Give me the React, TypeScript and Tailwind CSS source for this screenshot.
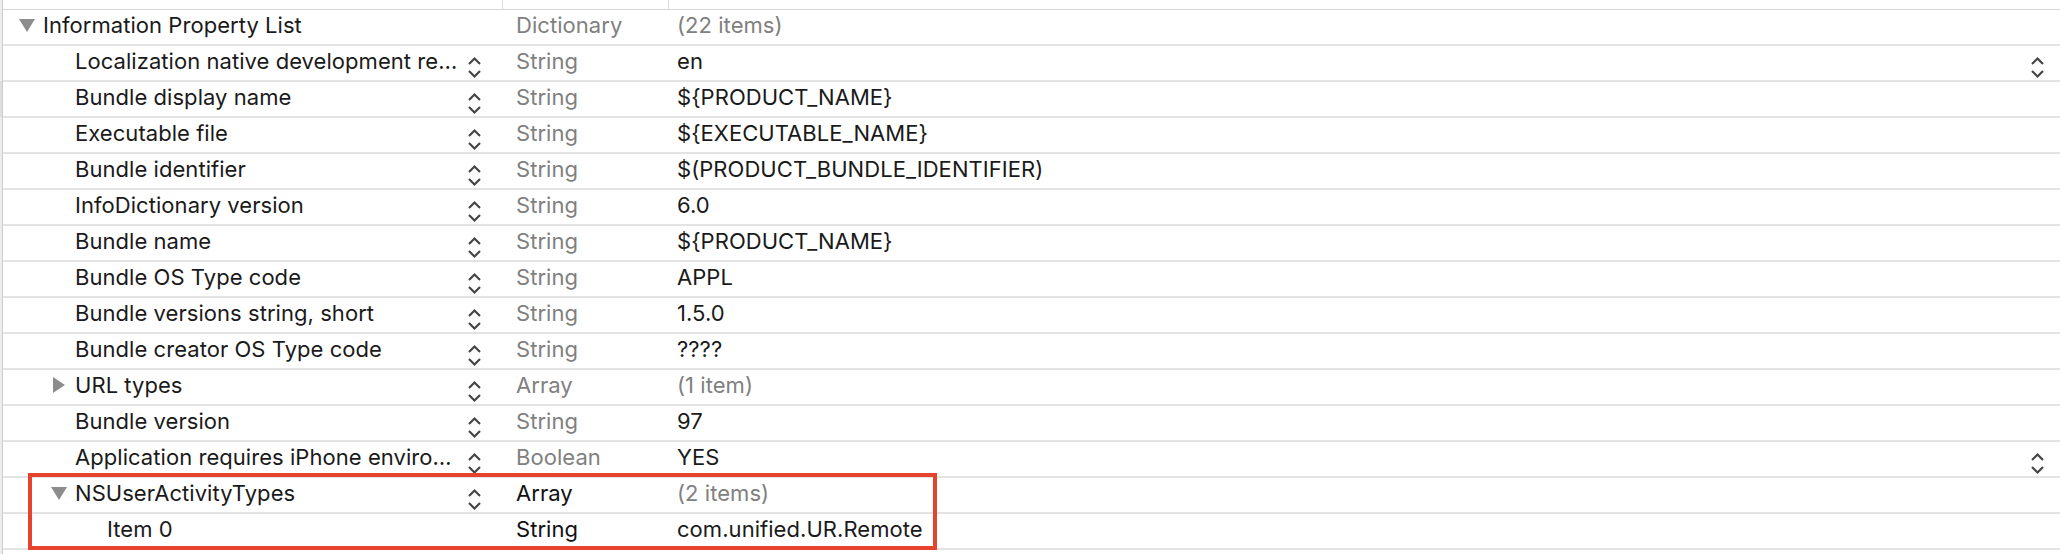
import React from 'react';

type Row = {
  level: 0 | 1 | 2;
  name: string;
  type: string;
  value: string;
  disclosure?: 'open' | 'closed';
  stepper?: boolean;
  popup?: boolean;
  typeDark?: boolean;
  valueGray?: boolean;
};

const rows: Row[] = [
  { level: 0, name: 'Information Property List', type: 'Dictionary', value: '(22 items)', disclosure: 'open', stepper: false, valueGray: true },
  { level: 1, name: 'Localization native development re…', type: 'String', value: 'en', popup: true },
  { level: 1, name: 'Bundle display name', type: 'String', value: '${PRODUCT_NAME}' },
  { level: 1, name: 'Executable file', type: 'String', value: '${EXECUTABLE_NAME}' },
  { level: 1, name: 'Bundle identifier', type: 'String', value: '$(PRODUCT_BUNDLE_IDENTIFIER)' },
  { level: 1, name: 'InfoDictionary version', type: 'String', value: '6.0' },
  { level: 1, name: 'Bundle name', type: 'String', value: '${PRODUCT_NAME}' },
  { level: 1, name: 'Bundle OS Type code', type: 'String', value: 'APPL' },
  { level: 1, name: 'Bundle versions string, short', type: 'String', value: '1.5.0' },
  { level: 1, name: 'Bundle creator OS Type code', type: 'String', value: '????' },
  { level: 1, name: 'URL types', type: 'Array', value: '(1 item)', disclosure: 'closed', valueGray: true },
  { level: 1, name: 'Bundle version', type: 'String', value: '97' },
  { level: 1, name: 'Application requires iPhone enviro…', type: 'Boolean', value: 'YES', popup: true },
  { level: 1, name: 'NSUserActivityTypes', type: 'Array', value: '(2 items)', disclosure: 'open', typeDark: true, valueGray: true },
  { level: 2, name: 'Item 0', type: 'String', value: 'com.unified.UR.Remote', stepper: false, typeDark: true },
];

const indent = { 0: 'pl-[16px]', 1: 'pl-[48px]', 2: 'pl-[80px]' };

// the little up/down stepper Xcode shows next to keys and popup values
const Stepper = ({ className }: { className?: string }) => (
  <svg width="15" height="23" viewBox="0 0 15 23" className={className} fill="none" stroke="#454545" strokeWidth="2.2">
    <path d="M2 8 L7.5 2.5 L13 8" />
    <path d="M2 15 L7.5 20.5 L13 15" />
  </svg>
);

const Disclosure = ({ open }: { open: boolean }) =>
  open ? (
    <svg width="16" height="13" viewBox="0 0 16 13" className="mb-[4px]">
      <path d="M0 0 H16 L8 13 Z" fill="#8c8c8c" />
    </svg>
  ) : (
    <svg width="12" height="16" viewBox="0 0 12 16" className="ml-[2px] mb-[4px]">
      <path d="M0 0 L12 8 L0 16 Z" fill="#8c8c8c" />
    </svg>
  );

export default function App() {
  return (
    <div
      className="flex w-[2060px] h-[554px] bg-white overflow-hidden text-[22px] tracking-[0.05px] leading-none"
      style={{ fontFamily: 'Inter, "Liberation Sans", sans-serif' }}
    >
      {/* left gutter */}
      <div className="w-[3px] shrink-0 flex flex-col bg-[#ececec] border-r border-[#cdcdcd]">
        <div className="h-[81px]" />
        <div className="h-[36px] bg-[#dedede]" />
      </div>

      <div className="relative flex-1 flex flex-col">
        {/* column header remnant */}
        <div className="h-[10px] shrink-0 flex border-b border-[#d6d6d6]">
          <div className="w-[500px] border-r border-[#dcdcdc]" />
          <div className="w-[166px] border-r border-[#dcdcdc]" />
          <div className="flex-1" />
        </div>

        {rows.map((r, i) => {
          const showStepper = r.stepper !== false;
          return (
            <div key={i} className="h-[36px] shrink-0 flex items-center border-b-2 border-[#e3e3e3]">
              <div className={`w-[500px] h-full flex items-center ${indent[r.level]}`}>
                <div className="w-[24px] shrink-0 flex items-center">
                  {r.disclosure && <Disclosure open={r.disclosure === 'open'} />}
                </div>
                <span className="mb-[5px] text-[#1a1a1a] whitespace-nowrap">{r.name}</span>
                {showStepper && <Stepper className="ml-auto mr-[21px] mt-[9px] shrink-0" />}
              </div>
              <div className="w-[166px] h-full flex items-center pl-[13px]">
                <span className={`mb-[5px] ${r.typeDark ? 'text-[#111]' : 'text-[#808080]'}`}>{r.type}</span>
              </div>
              <div className="flex-1 h-full flex items-center pl-[8px] pr-[15px]">
                <span className={`mb-[5px] whitespace-nowrap ${r.valueGray ? 'text-[#808080]' : 'text-[#1a1a1a]'}`}>
                  {r.value}
                </span>
                {r.popup && <Stepper className="ml-auto mt-[9px] shrink-0" />}
              </div>
            </div>
          );
        })}

        {/* red highlight drawn over the NSUserActivityTypes entry */}
        <div className="absolute left-[25px] top-[473px] w-[909px] h-[77px] border-[4px] border-[#e5432e] pointer-events-none" />
      </div>
    </div>
  );
}
